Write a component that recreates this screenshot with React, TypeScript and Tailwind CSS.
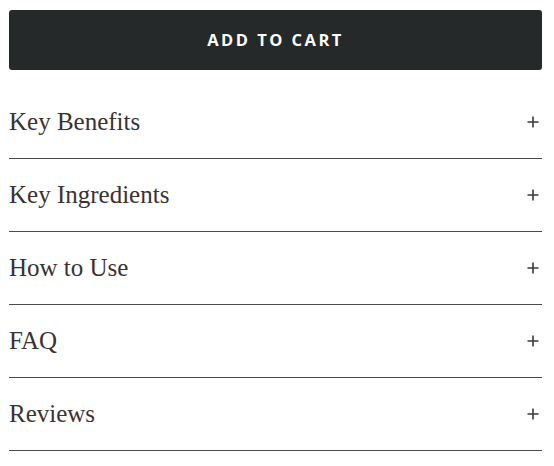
import React from 'react';

const sections = ['Key Benefits', 'Key Ingredients', 'How to Use', 'FAQ', 'Reviews'];

function PlusIcon() {
  return (
    <svg width="12" height="12" viewBox="0 0 12 12" className="text-[#3a3a3a]">
      <path d="M6 0.5v11M0.5 6h11" stroke="currentColor" strokeWidth="1.6" fill="none" />
    </svg>
  );
}

export default function App() {
  return (
    <div className="bg-white w-[554px] h-[466px] px-[9px] pt-[10px]">
      <button className="w-[533px] h-[60px] rounded-[3px] bg-[#25292a] text-white text-[16.5px] font-bold tracking-[0.15em] uppercase font-['Open_Sans',sans-serif]">
        Add to cart
      </button>
      <div className="mt-[16px] w-[533px]">
        {sections.map((s) => (
          <div key={s} className="flex items-center justify-between h-[73px] border-b border-[#4a4a4a]">
            <span className="text-[25px] font-['Liberation_Serif',serif] text-[#3a3232]">{s}</span>
            <span className="mr-[3px]"><PlusIcon /></span>
          </div>
        ))}
      </div>
    </div>
  );
}
